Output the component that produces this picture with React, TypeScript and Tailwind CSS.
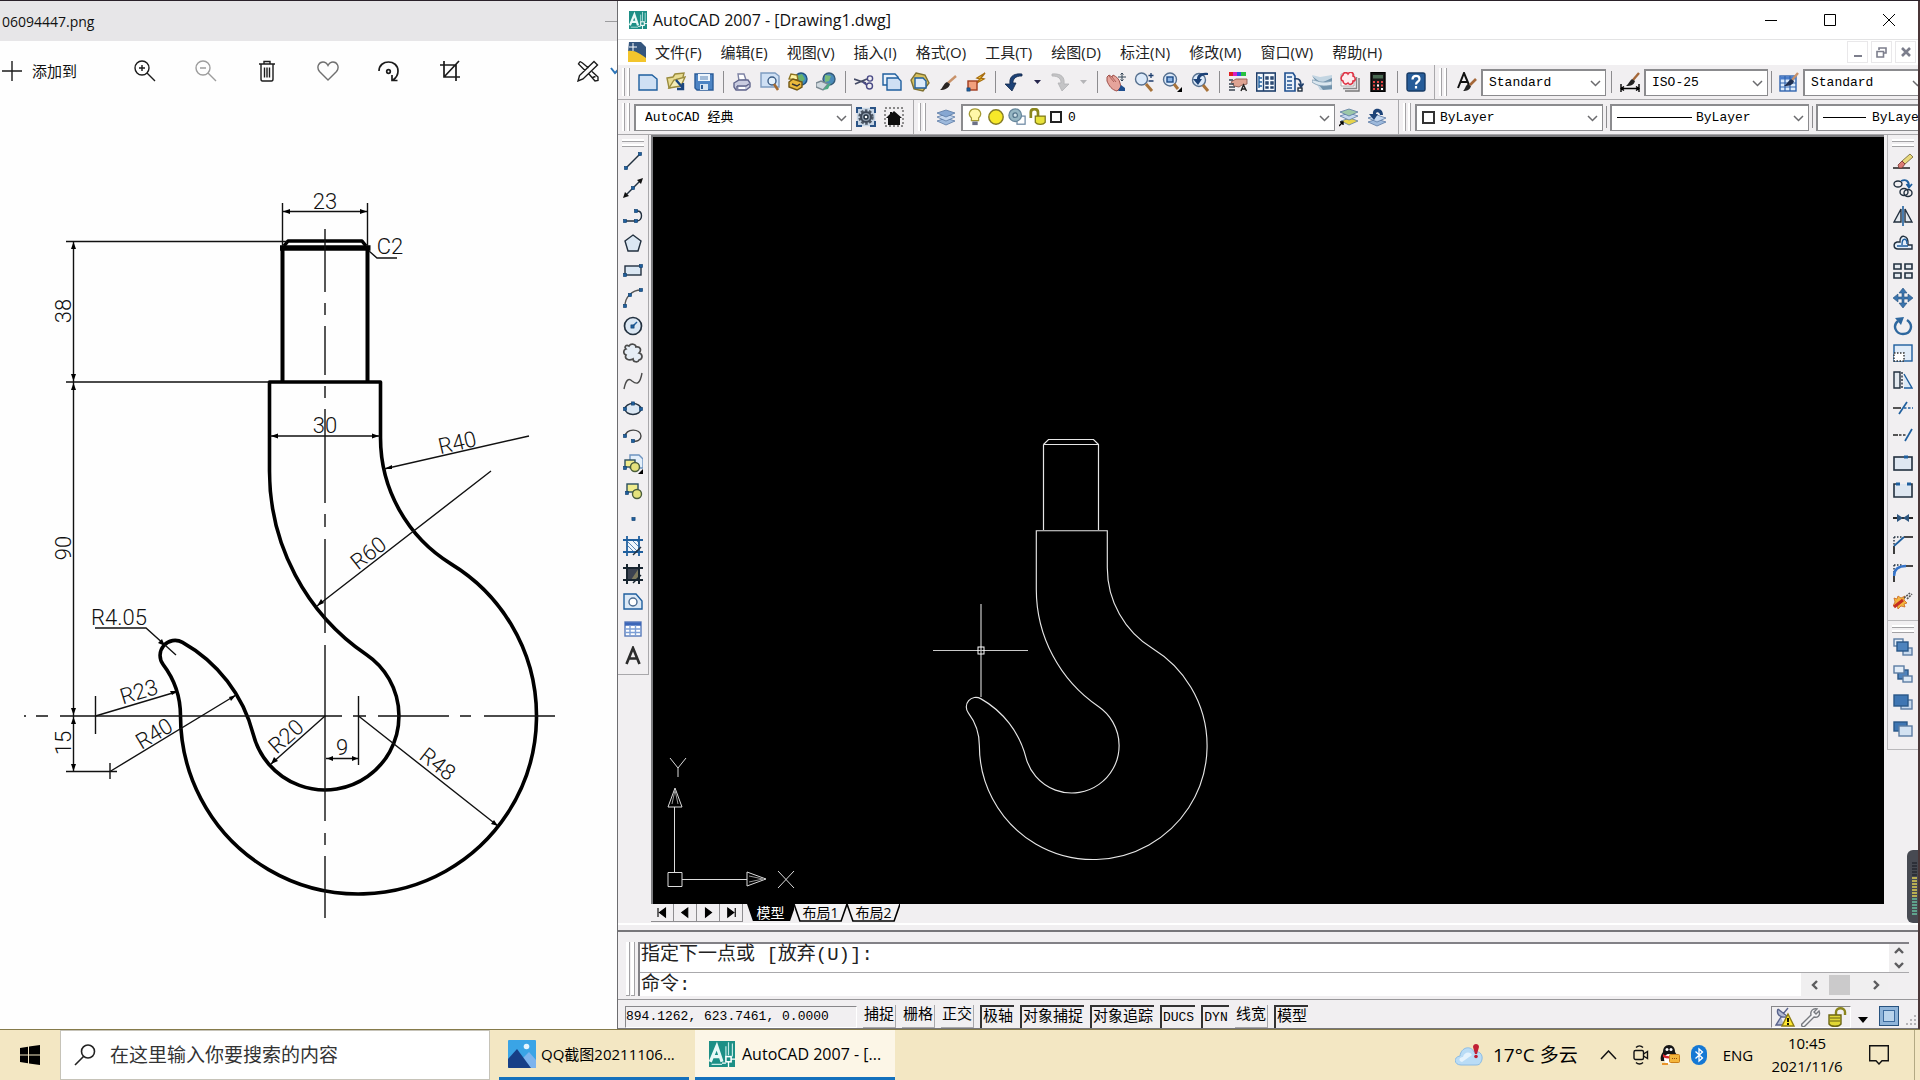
import React from "react";

const SANS = "font-['Open_Sans','Noto_Sans_CJK_SC',sans-serif]";
const MONO = "font-['Liberation_Mono','Noto_Sans_CJK_SC',monospace]";

const HOOK =
  "M269.5 382V471.3A222 222 0 0 0 366.6 654.8A74 74 0 1 1 253.3 734.5A148 148 0 0 0 182.5 642.4A15 15 0 0 0 163.2 664.6A85 85 0 0 1 180.5 716A178 178 0 1 0 451.3 564.1A148 148 0 0 1 380.5 437.8V382Z";

const B = "#1f5f9e";
const D = "#22303f";
const L = "#cfe0f4";

function Svg({ children, size = 20, className = "" }: { children: React.ReactNode; size?: number; className?: string }) {
  return (
    <svg viewBox="0 0 20 20" width={size} height={size} fill="none" stroke={D} strokeWidth="1.4" className={"shrink-0 " + className} aria-hidden="true">
      {children}
    </svg>
  );
}

const dot = (x: number, y: number) => <rect key={x + "-" + y} x={x - 1.6} y={y - 1.6} width="3.2" height="3.2" fill={B} stroke="#123f6d" strokeWidth="0.6" />;

const layersShape = (
  <g stroke="#5b7aa5" strokeWidth="0.8">
    <path d="M1 14l9-3 9 3-9 4z" fill="#9db9dc" />
    <path d="M1 10l9-3 9 3-9 4z" fill="#c3d6ee" />
    <path d="M1 6l9-3 9 3-9 4z" fill="#86a7d2" />
  </g>
);

const icons: Record<string, React.ReactNode> = {
  new: <path d="M1 3h13l5 4v11H1z" fill={L} stroke={B} />,
  open: (
    <>
      <path d="M1 6l6-1 2-3 9-1-3 12-12 3z" fill="#e8dc92" stroke="#9b8c3e" />
      <path d="M3 16L8 8l11-3-4 9z" fill="#f4edb8" stroke="#9b8c3e" />
      <path d="M10 8l7 8M17 11v6h-6" stroke="#1b4680" strokeWidth="2.4" />
    </>
  ),
  save: (
    <>
      <path d="M1 2h18v16H3l-2-2z" fill="#4d84c4" stroke="#2b5c98" />
      <path d="M4 2h12v7H4z" fill="#eef5fc" stroke="none" />
      <path d="M6 5h8M6 7h8" stroke="#89a8cb" />
      <path d="M6 12h8v6H6z" fill="#d5e3f2" stroke="none" />
      <path d="M8 13v4" stroke="#2b5c98" strokeWidth="2" />
    </>
  ),
  print: (
    <>
      <path d="M7 9L6 2h6l2 6z" fill="#fff" stroke="#7d82a4" />
      <path d="M2 11l5-3h9l2 3v4l-4 3H4l-2-3z" fill="#c9cce0" stroke="#60658c" />
      <path d="M5 14h9l3-2M5 14v3" stroke="#60658c" />
      <path d="M7 16h6" stroke="#fff" strokeWidth="2" />
    </>
  ),
  preview: (
    <>
      <path d="M1 1h14l4 3v11H1z" fill={L} stroke="#7e9cc0" />
      <circle cx="12" cy="9" r="4" fill="#e6f2fc" stroke="#3c5d86" />
      <path d="M14 12l4 6" stroke="#a46a30" strokeWidth="2.6" />
    </>
  ),
  publish: (
    <>
      <circle cx="13" cy="7" r="6" fill="#3f8bc0" stroke="#1f527f" />
      <path d="M9 4l5-2 3 5-4 4z" fill="#67b26b" stroke="none" />
      <path d="M1 7l2-5 6 1 1 5z" fill="#fff3a2" stroke="#8c7320" />
      <path d="M1 10l4-3 9 3v5l-5 3-8-3z" fill="#eab93c" stroke="#715714" />
      <path d="M4 12l5 2 3-2" stroke="#333" />
    </>
  ),
  dwf: (
    <>
      <circle cx="13" cy="7" r="6" fill="#4b8bb9" stroke="#355a78" />
      <path d="M9 3l6 1-2 5-4 1z" fill="#79bb79" stroke="none" />
      <path d="M0 11l5-2 7 3-5 6-7-3z" fill="#cfd8de" stroke="#7b8992" />
      <path d="M7 18l5-6 3-1-3 6z" fill="#4da884" stroke="none" />
    </>
  ),
  cut: (
    <>
      <path d="M0 7l12 4M1 12l12-5" stroke="#444b66" strokeWidth="1.8" />
      <circle cx="16" cy="6.500" r="2.600" stroke="#4a4a86" />
      <circle cx="15.500" cy="14" r="3" stroke="#4a4a86" />
      <path d="M9 10l4 3" stroke="#4a4a86" strokeWidth="2" />
    </>
  ),
  copy: (
    <>
      <path d="M1 2h12l3 3v8H1z" fill="#eaf2fb" stroke={B} />
      <path d="M5 6h11l3 3v9H5z" fill={L} stroke={B} />
    </>
  ),
  paste: (
    <>
      <path d="M6 1l9 2 4 8-6 8-9-2-3-9z" fill="#d9c25f" stroke="#7f7132" />
      <path d="M5 6h8l3 3v7H5z" fill="#dcebfa" stroke={B} />
    </>
  ),
  brush: (
    <>
      <path d="M10 11l8-7" stroke="#c8926a" strokeWidth="2.400" />
      <path d="M2 18c3-2 3-6 7-8l3 2c-1 4-5 6-10 6z" fill="#2b2522" stroke="none" />
    </>
  ),
  block: (
    <>
      <path d="M19 1l-8 5 3 1-5 5 9-5-3-1z" fill="#ffd83b" stroke="#a86e12" />
      <rect x="2" y="9" width="9" height="9" fill="#f2a07d" stroke="#a13d20" />
      {dot(2.500, 17.500)}
    </>
  ),
  undo: <path d="M18 2C8 1 5 6 6 12H1l7 7 4-8H9c0-4 2-7 9-7z" fill="#1c4277" stroke="#14294b" strokeWidth="0.800" />,
  redo: <path d="M2 2c10-1 13 4 12 10h5l-7 7-4-8h3c0-4-2-7-9-7z" fill="#c4c4c6" stroke="#b1b1b4" strokeWidth="0.800" />,
  pan: (
    <>
      <path d="M1 5l2-2 3 2 1-2c4 2 6 4 7 8l1 4-4 4c-5-1-8-5-10-10z" fill="#e6a49b" stroke="#9d4f49" strokeWidth="1" />
      <path d="M3 4l5 6M6 5l4 5" stroke="#9d4f49" strokeWidth="0.800" />
      <path d="M12 19h7v-3l-4-3z" fill="#1f4f8f" stroke="none" />
      <path d="M16 1v8M12 5h8M14.500 2.500L16 1l1.500 1.500M14.500 7.500L16 9l1.500-1.500" stroke="#345" strokeWidth="1" />
    </>
  ),
  zoom: (
    <>
      <circle cx="7.500" cy="7" r="6" fill="#dceafa" stroke="#56708f" />
      <path d="M12 12l6 7" stroke="#a8733a" strokeWidth="3" />
      <path d="M17 1v5M14.500 3.500h5M14.500 9h5" stroke="#1c3d6e" strokeWidth="1.300" />
    </>
  ),
  zoomwin: (
    <>
      <circle cx="8" cy="7.500" r="6.500" fill="#dceafa" stroke="#56708f" />
      <rect x="5" y="5" width="6" height="5" fill="#8db4e3" stroke="#1c4a87" />
      <path d="M12 12l4 5" stroke="#a8733a" strokeWidth="3" />
      <path d="M20 15v5h-5z" fill="#000" stroke="none" />
    </>
  ),
  zoomprev: (
    <>
      <circle cx="9" cy="8" r="6.500" fill="#dceafa" stroke="#56708f" />
      <path d="M13 13l5 6" stroke="#a8733a" strokeWidth="3" />
      <path d="M18 1C9 0 7 4 7 7H3l5 6 4-6h-2c0-2 2-4 8-4z" fill="#1c4277" stroke="none" />
    </>
  ),
  props: (
    <>
      <path d="M1 2h4" stroke="#e02020" strokeWidth="4" />
      <path d="M5 2h4" stroke="#d61fc5" strokeWidth="4" />
      <path d="M9 2h4" stroke="#2c53e0" strokeWidth="4" />
      <path d="M13 2h5" stroke="#26c140" strokeWidth="4" />
      <path d="M3 10l5-3 11 0v5l-5 1-3 2-5-1z" fill="#dfa392" stroke="#8e5a50" strokeWidth="0.900" />
      <path d="M1 8h4M1 12h5M1 15h6M1 18h6" stroke="#3b4450" />
      <path d="M13 19l2.500-6 3 6M14 17h4" stroke="#222" />
    </>
  ),
  dcenter: (
    <>
      <rect x="0.700" y="1" width="18.600" height="18" fill="#f6fafe" stroke="#1f3f6b" strokeWidth="1.600" />
      <path d="M7.500 1v18" stroke="#1f3f6b" />
      <path d="M3 4v12M3 6h3M3 10h3M3 14h3" stroke={B} />
      <path d="M10 5h2v2h-2zM15 5h2v2h-2zM10 10h2v2h-2zM15 10h2v2h-2zM10 15h2v1h-2zM15 15h2v1h-2z" stroke="#1f3f6b" fill="none" />
    </>
  ),
  palettes: (
    <>
      <path d="M1 1h8l2 3v15H1z" fill="#e7f0fa" stroke="#1f4f8f" strokeWidth="1.600" />
      <path d="M3 5h5M3 9h5M3 13h5M3 16h5" stroke="#1f4f8f" />
      <path d="M10 7c5-1 7 1 7 7M14.500 11.500L17 15l2.500-3.500" stroke="#1f3f6b" strokeWidth="1.600" />
      <rect x="14" y="16" width="4" height="3" fill="#fff" />
    </>
  ),
  sheets: (
    <>
      <path d="M0 3l8 2 12-2v15H8z" fill="#c3d5e2" stroke="none" />
      <path d="M0 4l9 7 11-5v11l-9 1z" fill="#7293ac" stroke="none" />
      <path d="M0 8c5 0 9 4 20 1v4c-8 2-15 1-20-3z" fill="#dbe7ef" stroke="#7f9cb2" strokeWidth="0.800" />
    </>
  ),
  markup: (
    <>
      <path d="M19 6v13H5" stroke="#777" />
      <path d="M16.500 5v11.500H3" stroke="#888" />
      <path d="M1 2h13v12H1z" fill="#fff" stroke="#999" strokeWidth="0.800" />
      <path d="M3 3c0-3 4-3 5-1 2-3 6-2 5 2 3 1 3 5 0 5 0 4-4 4-5 2-2 2-5 1-5-2-3-1-2-5 0-6z" fill="#fdecee" stroke="#df3345" strokeWidth="1.600" />
    </>
  ),
  calc: (
    <>
      <rect x="3" y="0.500" width="14" height="19" fill="#191919" stroke="#000" />
      <rect x="5" y="3" width="10" height="3.500" fill="#4a6a52" stroke="none" />
      <path d="M5 10h2M9 10h2M13 10h2M5 13.500h2M9 13.500h2M13 13.500h2M5 17h2M9 17h2M13 17h2" stroke="#e64646" strokeWidth="2" />
      <path d="M9 13.500h2M13 17h2" stroke="#fff" strokeWidth="2" />
    </>
  ),
  help: (
    <>
      <rect x="1" y="1" width="18" height="18" rx="2" fill="#265c99" stroke="#173b66" />
      <path d="M6.500 7.500c0-5 7-4.500 7-.5 0 3-3.500 2.500-3.500 5.500M10 14v2.500" stroke="#fff" strokeWidth="2.200" />
    </>
  ),
  textstyle: (
    <>
      <path d="M1 16L7 1l5 12M4 10h6" stroke="#111" strokeWidth="2" />
      <path d="M13 13l6-6" stroke="#a5683a" strokeWidth="2.600" />
      <path d="M6 19c2-1 2-5 5-7l3 2c-1 4-4 5-8 5z" fill="#222" stroke="none" />
    </>
  ),
  dimstyle: (
    <>
      <path d="M13 8l6-7" stroke="#a5683a" strokeWidth="2.400" />
      <path d="M6 14c3-2 3-5 6-7l3 2c-1 4-4 5-9 5z" fill="#222" stroke="none" />
      <path d="M1 12v8M19 12v8M1 16.500h18M4 14.500l-3 2 3 2M16 14.500l3 2-3 2" stroke="#000" />
    </>
  ),
  tablestyle: (
    <>
      <rect x="1" y="4" width="16" height="15" fill="#dcebfb" stroke="#3164ae" />
      <path d="M1 6h16" stroke="#4b7dcb" strokeWidth="3" />
      <path d="M1 11h16M1 15h16M6 4v15M11 4v15" stroke="#3164ae" strokeWidth="1.200" />
      <path d="M13 8l6-7" stroke="#c8926a" strokeWidth="2.400" />
      <path d="M5 14c3-2 4-5 7-7l3 2c-1 4-4 5-10 5z" fill="#1f3052" stroke="none" />
    </>
  ),
  gear: (
    <>
      <rect x="0.800" y="0.800" width="18.400" height="18.400" fill="#c7d5e4" stroke="none" />
      <path d="M1 6V1h5M14 1h5v5M19 14v5h-5M6 19H1v-5" stroke="#2c5486" strokeWidth="2" />
      <circle cx="10" cy="10" r="6.500" stroke="#4d5866" strokeWidth="2.400" strokeDasharray="2.600 1.500" />
      <circle cx="10" cy="10" r="5" fill="#8f9dac" stroke="#3d4857" strokeWidth="2" />
      <circle cx="10" cy="10" r="2" fill="#fff" />
    </>
  ),
  home: (
    <>
      <rect x="1" y="1" width="18" height="18" stroke="#666" strokeDasharray="2 2" />
      <path d="M2 11l4-4V5h2v1l2-2 8 7h-2v7H4v-7z" fill="#0c0c0c" stroke="none" />
    </>
  ),
  layers: layersShape,
  layercur: (
    <>
      <g stroke="#5b7aa5" strokeWidth="0.800">
        <path d="M2 14l9-3 8 3-9 4z" fill="#e7d34a" />
        <path d="M1 9l9-3 9 3-9 4z" fill="#c3d6ee" />
        <path d="M1 5l9-3 9 3-9 4z" fill="#9cc7a8" />
      </g>
      <path d="M0 19l4-4M1 15h3v3" stroke="#000" />
    </>
  ),
  layerprev: (
    <>
      <g stroke="#5b7aa5" strokeWidth="0.800">
        <path d="M1 15l9-3 9 3-9 4z" fill="#9db9dc" />
        <path d="M1 11l9-3 9 3-9 4z" fill="#c3d6ee" />
      </g>
      <path d="M16 8c0-8-11-8-10-1H2l5 6 4-6H9c0-3 4-2 4 1z" fill="#1c4277" stroke="none" />
    </>
  ),
  bulb: (
    <>
      <path d="M6 11C1 6 5 1 10 1s9 5 4 10v3H6z" fill="#fff8a8" stroke="#a49a33" />
      <path d="M7 15h6v4H7z" fill="#6c7188" stroke="none" />
    </>
  ),
  sun: <circle cx="10" cy="10" r="8" fill="#f7e829" stroke="#857c25" strokeWidth="1.600" />,
  freeze: (
    <>
      <rect x="10" y="9" width="9" height="9" fill="#fff" stroke="#6e8aa4" />
      <circle cx="8" cy="8" r="7" fill="#96b6c3" stroke="#67879c" />
      <circle cx="8" cy="8" r="2.500" fill="#cfe0e8" stroke="#55768c" />
    </>
  ),
  lock: (
    <>
      <path d="M2 11V5c0-5 8-5 8 0v4" stroke="#8b861d" strokeWidth="3" />
      <path d="M7 9h11v7c-2 3-9 3-11 0z" fill="#e8e23a" stroke="#7e791b" />
    </>
  ),
  line: <>
    <path d="M3 17L17 3" />
    {dot(3, 17)}
    {dot(17, 3)}
  </>,
  xline: <>
    <path d="M2 18L18 2" />
    <path d="M0 20l2-6 4 4zM20 0l-6 2 4 4z" fill="#111" stroke="none" />
    {dot(10, 10)}
  </>,
  pline: <>
    <path d="M2 15h12M14 5c6 0 6 9 0 10" />
    {dot(2, 15)}
    {dot(13, 15)}
    {dot(13, 5)}
  </>,
  polygon: <path d="M10 2l8 6-3 10H5L2 8z" fill="#dbe7f3" />,
  rect: <>
    <rect x="2" y="5" width="16" height="9" fill="#dbe7f3" />
    {dot(2, 14)}
    {dot(18, 5)}
  </>,
  arc: <>
    <path d="M2 18C2 9 9 2 18 2" stroke="#555" />
    {dot(2, 18)}
    {dot(7, 7)}
    {dot(18, 2)}
  </>,
  circle: <>
    <circle cx="10" cy="10" r="8.500" fill="#dbe7f3" strokeWidth="1.700" />
    <path d="M10 10l4-4" stroke={B} />
    {dot(9.500, 10.500)}
  </>,
  cloud: <path d="M6 3c2-3 7-2 7 1 4-1 6 3 3 6 4 1 4 6 0 7-1 3-6 2-6-1-4 2-9 0-7-4-3-1-3-5 0-6-2-2 0-5 3-3z" fill="#e6edf5" stroke="#4b4b4b" strokeWidth="1.700" />,
  spline: <path d="M1 18C3 8 6 7 9 10c5 4 8 3 10-8" stroke="#4b4b4b" />,
  ellipse: <>
    <ellipse cx="10" cy="10" rx="8" ry="5.500" fill="#dbe7f3" />
    {dot(2, 10)}
    {dot(18, 10)}
    {dot(10, 4.500)}
  </>,
  ellipsearc: <>
    <path d="M2 11C2 2 18 2 18 10c0 4-4 6-8 5" stroke="#444" />
    {dot(2, 10)}
    {dot(10, 15)}
  </>,
  insert: <>
    <path d="M7 1h9l4 4v9H7z" fill="#e4effa" stroke="#6e94c0" />
    <rect x="2" y="6" width="10" height="7" fill="#f0ec8c" stroke="#2a4f5e" />
    <circle cx="12" cy="13" r="4.500" fill="#e5e27c" stroke="#4a5d3b" />
    {dot(2, 14)}
    <path d="M20 15v5h-5z" fill="#000" stroke="none" />
  </>,
  mkblock: <>
    <rect x="4" y="3" width="11" height="8" fill="#f0ec8c" stroke="#2a4f5e" />
    <circle cx="14" cy="13" r="4.500" fill="#e5e27c" stroke="#4a5d3b" />
    {dot(4, 12)}
  </>,
  point: dot(10.500, 10),
  hatch: <>
    <path d="M5 4h10v12H5z" fill="#eff5fb" stroke="none" />
    <path d="M5 6l9 9M5 10l6 6M9 4l6 6M13 4l3 3" stroke="#5a85b5" strokeWidth="1" />
    <path d="M0 4h20M0 16h20M4 0v20M16 0v20" stroke={B} strokeWidth="1.800" />
    <path d="M10 19l8-8" stroke={D} />
  </>,
  gradient: <>
    <path d="M4 4h12v12H4z" fill="#3b4250" stroke="none" />
    <path d="M16 4v12H8z" fill="#7d7a5e" stroke="none" />
    <path d="M0 4h20M0 16h20M4 0v20M16 0v20" stroke="#17242f" strokeWidth="2" />
    <path d="M10 19l8-8" stroke="#17242f" />
  </>,
  region: <>
    <path d="M1 3h12l6 7v8H1z" fill="#dce9f6" stroke={B} />
    <circle cx="10" cy="11" r="4" fill="#fff" stroke="#4a6b91" />
  </>,
  table: <>
    <rect x="2" y="3" width="16" height="14" fill="#fff" stroke="#5779b8" />
    <path d="M2 5h16" stroke="#3c66b8" strokeWidth="3.500" />
    <path d="M2 10h16M2 13.500h16M7 6v11M12.500 6v11" stroke="#7c9fd6" />
  </>,
  mtext: <path d="M3.500 18L10 2l6.500 16M6 12.500h8" stroke="#2c2c2c" strokeWidth="2.600" />,
  erase: <>
    <path d="M0 17h17" stroke="#111" />
    <path d="M9 10l8-7 3 3-8 7z" fill="#e9d97c" stroke="#6d6130" strokeWidth="0.800" />
    <path d="M5 14l4-4 3 3-3 4H6z" fill="#db7b74" stroke="#74332f" strokeWidth="0.800" />
  </>,
  copyobj: <>
    <ellipse cx="5" cy="6" rx="4" ry="3" />
    <ellipse cx="11" cy="14" rx="4" ry="3.500" />
    <ellipse cx="15" cy="15" rx="4" ry="3.500" />
    <path d="M8 3c5-2 8 0 8 5M13.500 6L16 9.500 19 6" stroke={B} strokeWidth="1.800" />
  </>,
  mirror: <>
    <path d="M8 3v13H1zM12 3v13h7z" fill="#e4e9ef" />
    <path d="M10 0v20" stroke={B} strokeWidth="1.600" />
  </>,
  offset: <>
    <path d="M5 16h14v-4h-4C16 1 6 1 7 9H4c-4 1-4 7 1 7z" fill="#e4eefa" />
    <path d="M4 13h11M9 12c0-8 5-7 5-1" stroke={B} />
  </>,
  array: <path d="M1 3h7v5H1zM12 3h7v5h-7zM1 12h7v5H1zM12 12h7v5h-7z" fill="#e4e9ef" strokeWidth="1.600" />,
  move: <path d="M10 0l4 5h-3v4h4V6l5 4-5 4v-3h-4v4h3l-4 5-4-5h3v-4H5v3l-5-4 5-4v3h4V5H6z" fill="#3b74ad" stroke="#27537f" strokeWidth="0.600" />,
  rotate: <>
    <path d="M5 5C-1 10 3 18 10 18c8 0 11-9 4-14" stroke="#2f689f" strokeWidth="2.400" />
    <path d="M2 2l9-1-3 8z" fill="#2f689f" stroke="none" />
  </>,
  scale: <>
    <rect x="1" y="2" width="18" height="16" fill="#e1ecf8" stroke={B} />
    <rect x="1" y="10" width="10" height="8" fill="#fff" stroke="#333" strokeDasharray="1.500 1.500" />
  </>,
  stretch: <>
    <path d="M1 2h6v16H1z" fill="#e4e9ef" />
    <path d="M9 2v16" strokeDasharray="2 1.500" />
    <path d="M11 4l8 14h-8" fill="#dce9f6" stroke={B} />
  </>,
  trim: <>
    <path d="M0 10h8" stroke="#111" />
    <path d="M11 10h9" stroke={B} strokeDasharray="2.500 1.500" />
    <path d="M6 16l8-12" stroke={B} strokeWidth="1.700" />
  </>,
  extend: <>
    <path d="M0 10h5" stroke="#111" />
    <path d="M6 10h8" stroke="#333" strokeDasharray="2.500 1.500" />
    <path d="M12 16l7-12" stroke={B} strokeWidth="1.700" />
  </>,
  breakpt: <>
    <rect x="1" y="4" width="18" height="13" fill="#dfe7f1" strokeWidth="1.600" />
    <path d="M11 4h4" stroke={B} strokeWidth="3" />
  </>,
  brk: <>
    <path d="M4 4H1v13h18V4h-3" fill="#dfe7f1" strokeWidth="1.600" />
    <path d="M3 4h4M14 4h4" stroke={B} strokeWidth="3" />
  </>,
  join: <>
    <path d="M0 10h20" stroke="#111" strokeWidth="1.800" />
    <path d="M4 6l6 4-6 4zM16 6l-6 4 6 4z" fill="#2d5680" stroke="none" />
  </>,
  chamfer: <>
    <path d="M1 2h9M1 2v8" strokeDasharray="1.500 1.500" />
    <path d="M11 2h9M1 11v8" stroke="#111" strokeWidth="1.600" />
    <path d="M1 11l10-9" stroke={B} strokeWidth="1.700" />
  </>,
  fillet: <>
    <path d="M1 2h9M1 2v8" strokeDasharray="1.500 1.500" />
    <path d="M13 3h7M1 13v6" stroke="#111" strokeWidth="1.600" />
    <path d="M1 13C1 6 6 3 13 3" stroke="#3674c9" strokeWidth="2.600" />
  </>,
  explode: <>
    <path d="M1 8l3 1 1-3 3 2 4-2-1 4 3 3-3 1 1 3-4-1-3 3-1-4-4 1 2-4z" fill="#f4b63f" stroke="#c9681f" strokeWidth="0.800" />
    <path d="M1 17l9-7" stroke="#c52d22" strokeWidth="3" />
    <path d="M11 8l6-5M14 9l5-5" stroke="#555" strokeWidth="1.600" strokeDasharray="2 1" />
  </>,
  front: <>
    <rect x="1" y="2" width="9" height="7" fill="#e3edf8" stroke="#5c7da3" />
    <rect x="10" y="11" width="9" height="7" fill="#c8daee" stroke="#5c7da3" />
    <rect x="4" y="5" width="11" height="9" fill="#4e83bd" stroke="#2a5788" />
  </>,
  back: <>
    <rect x="5" y="6" width="10" height="9" fill="#4e83bd" stroke="#2a5788" />
    <rect x="1" y="2" width="10" height="7" fill="#e3edf8" stroke="#5c7da3" />
    <rect x="10" y="12" width="9" height="6" fill="#dbe8f5" stroke="#5c7da3" />
  </>,
  above: <>
    <rect x="8" y="8" width="11" height="9" fill="#c8daee" stroke="#5c7da3" />
    <rect x="1" y="3" width="14" height="11" fill="#3f76b3" stroke="#2a5788" />
  </>,
  below: <>
    <rect x="1" y="3" width="13" height="9" fill="#3f76b3" stroke="#2a5788" />
    <rect x="6" y="7" width="13" height="10" fill="#d3e2f2" stroke="#5c7da3" />
  </>,
};

function AcadLogo({ className }: { className: string }) {
  return (
    <svg viewBox="0 0 20 20" className={"shrink-0 " + className} preserveAspectRatio="none" aria-hidden="true">
      <rect width="20" height="20" fill="#1d8f86" />
      <path d="M1 16L6 4l4 12M3 12h6" stroke="#e9f8f6" strokeWidth="2.400" fill="none" />
      <path d="M15 1v10M13 4v8M18 2v10M2 18h8" stroke="#c6ebe7" strokeWidth="0.900" />
      <rect x="13" y="12" width="4" height="4" fill="#1d8f86" stroke="#fff" strokeWidth="1.200" />
      <path d="M17 14h3M15 16v4M10 17h3" stroke="#fff" />
    </svg>
  );
}

function Grip() {
  return (
    <span className="flex h-7 w-2 shrink-0 justify-between">
      <span className="w-[3px] border-r border-[#a3a2a5] bg-white" />
      <span className="w-[3px] border-r border-[#a3a2a5] bg-white" />
    </span>
  );
}

function HGrip() {
  return (
    <span className="mx-1 flex h-[8px] shrink-0 flex-col justify-between self-stretch">
      <span className="h-[3px] border-b border-[#a3a2a5] bg-white" />
      <span className="h-[3px] border-b border-[#a3a2a5] bg-white" />
    </span>
  );
}

function Tool({ name, label }: { name: string; label: string }) {
  return (
    <button type="button" aria-label={label} className="flex h-7 w-7 shrink-0 items-center justify-center">
      <Svg>{icons[name]}</Svg>
    </button>
  );
}

function Sep({ narrow = false }: { narrow?: boolean }) {
  return (
    <span className={"flex shrink-0 justify-center " + (narrow ? "w-[7px]" : "w-[10px]")}>
      <span className="h-[22px] w-px bg-[#8d8c8f]" />
    </span>
  );
}

function Caret({ muted = false }: { muted?: boolean }) {
  return (
    <button type="button" aria-label="更多" className="flex h-7 w-[18px] shrink-0 items-center justify-center">
      <svg width="7" height="4" viewBox="0 0 7 4" fill={muted ? "#b5b5b8" : "#26264d"} aria-hidden="true">
        <path d="M0 0h7L3.500 4z" />
      </svg>
    </button>
  );
}

function Combo({ label, value, className, pad = "pl-[6px]", children }: { label: string; value: string; className: string; pad?: string; children?: React.ReactNode }) {
  return (
    <span className={"relative flex h-[27px] shrink-0 " + className}>
      <select
        aria-label={label}
        defaultValue={value}
        className={"h-full w-full appearance-none border border-t-2 border-l-2 border-[#8b8b8e] bg-white text-[13px] text-black " + MONO + " " + pad}
      >
        <option>{value}</option>
      </select>
      {children}
      <svg width="11" height="7" viewBox="0 0 11 7" fill="none" stroke="#6b6b6e" strokeWidth="1.500" className="pointer-events-none absolute top-[11px] right-[5px]" aria-hidden="true">
        <path d="M1 1l4.500 4.500L10 1" />
      </svg>
    </span>
  );
}

const BAR = "flex h-[35px] shrink-0 items-center border-b border-r border-[#a9a8ab] bg-[#f1eff1] pl-1";

function PhotoWindow() {
  const stroke = { fill: "none", stroke: "#1b1b1b", strokeWidth: 1.4 } as const;
  const photoBtn = "flex h-10 w-[61px] shrink-0 items-center justify-center";
  return (
    <section className={"flex min-w-0 flex-col overflow-hidden bg-[#fefefe] " + SANS}>
      <header className="flex h-[40px] shrink-0 items-center justify-between bg-[#e7e6e8] pl-[2px]">
        <h1 className="text-[14px] text-[#111]">06094447.png</h1>
        <button type="button" aria-label="最小化" className="flex h-full w-3 items-center">
          <span className="h-px w-3 bg-[#9c9c9e]" />
        </button>
      </header>
      <nav className="flex h-[60px] shrink-0 items-center">
        <button type="button" className="flex w-[114px] shrink-0 items-center gap-[10px] pl-[2px] text-[15px] text-[#111]">
          <svg width="20" height="20" viewBox="0 0 20 20" {...stroke} aria-hidden="true">
            <path d="M0 10h20M10 0v20" />
          </svg>
          添加到
        </button>
        <button type="button" aria-label="放大" className={photoBtn}>
          <svg width="22" height="22" viewBox="0 0 22 22" {...stroke} aria-hidden="true">
            <circle cx="8" cy="8" r="7" />
            <path d="M13 13l8 8M8 5v6M5 8h6" />
          </svg>
        </button>
        <button type="button" aria-label="缩小" className={photoBtn}>
          <svg width="22" height="22" viewBox="0 0 22 22" {...stroke} stroke="#9d9d9d" aria-hidden="true">
            <circle cx="8" cy="8" r="7" />
            <path d="M13 13l8 8M5 8h6" />
          </svg>
        </button>
        <button type="button" aria-label="删除" className={photoBtn}>
          <svg width="18" height="22" viewBox="0 0 18 22" {...stroke} aria-hidden="true">
            <path d="M1 4h16M6 4V1.500h6V4M3 4v15c0 1 .5 2 1.500 2h9c1 0 1.500-1 1.500-2V4M6.500 7.500v10M9 7.500v10M11.500 7.500v10" />
          </svg>
        </button>
        <button type="button" aria-label="收藏" className={photoBtn}>
          <svg width="22" height="20" viewBox="0 0 22 20" {...stroke} stroke="#707070" aria-hidden="true">
            <path d="M11 19L2.500 10.500C-1 6 2 1 6 1c2.500 0 4 1.500 5 3.500C12 2.500 13.500 1 16 1c4 0 7 5 3.500 9.500z" />
          </svg>
        </button>
        <button type="button" aria-label="旋转" className={photoBtn}>
          <svg width="22" height="22" viewBox="0 0 22 22" {...stroke} strokeWidth={1.700} aria-hidden="true">
            <path d="M1 11C1-1 20-1 20 11c0 4-2 7-5 9M14 15v5.500h5.500" />
            <circle cx="10.500" cy="11.500" r="1.800" />
          </svg>
        </button>
        <button type="button" aria-label="裁剪" className={photoBtn}>
          <svg width="22" height="22" viewBox="0 0 22 22" {...stroke} strokeWidth={1.700} aria-hidden="true">
            <path d="M5 1v16h16M1 5h16v16M5 17L20 1" />
          </svg>
        </button>
        <span className="flex-1" />
        <button type="button" aria-label="编辑" className="flex h-10 w-[60px] shrink-0 items-center justify-center">
          <svg width="22" height="22" viewBox="0 0 22 22" {...stroke} aria-hidden="true">
            <path d="M17 1.500l3.500 3.500L6 19l-5 2 1.500-5.500zM3 1.500L1.500 4 8 10.500M3 1.500L5.500 3l6 5M12 14l6 7 3-.5V17l-6-5.500M15.500 17.500l3-1" />
          </svg>
        </button>
        <svg width="7" height="8" viewBox="0 0 7 8" fill="none" stroke="#2b74b8" strokeWidth="2" className="-ml-2 shrink-0" aria-hidden="true">
          <path d="M1 1l4 5 3-3" />
        </svg>
      </nav>
      <svg viewBox="0 101 617 927" preserveAspectRatio="xMinYMin meet" className="min-h-0 w-full flex-1" role="img" aria-label="吊钩零件图">
        <g fill="none" stroke="#000" strokeWidth="3.600" strokeLinejoin="round">
          <path d={HOOK} />
          <path d="M282.500 250V382M367.500 250V382" strokeWidth="4" />
          <path d="M284 246l4-5H362l4 5" strokeWidth="3.500" />
          <path d="M280 248H370.500" strokeWidth="5.500" />
        </g>
        <g fill="none" stroke="#111" strokeWidth="1.400">
          <path d="M282.500 203V246M367.500 203V246M282 211.500H368M66 241.500H287M66 382H269M73.500 241V771M369 251l8 7h20M270 436H380" />
          <path d="M384 469L529 436M317 606L491 471M95 628h51l30 27M95.500 716L176 692M110 771.500L236 695M325 716L271 764M358.500 716L498 826" />
          <path d="M358.500 696V765M326 758.500H358M66 771.500H117M110 763V779M95.500 696V734" />
          <path d="M325 229V292M325 303V315M325 326V375M325 386V398M325 409V503M325 514V527M325 539V633M325 645V821M325 833V845M325 856V918" />
          <path d="M24 716H26M36 716H48M60 716H342M353 716H366M378 716H449M460 716H471M484 716H555" />
        </g>
        <g fill="#000">
          <path d="M283 211.500l7-2.500v5zM367 211.500l-7-2.500v5zM73.500 242l-2.500 7h5zM73.500 381l-2.500-7h5zM73.500 383l-2.500 7h5zM73.500 715l-2.500-7h5zM73.500 717l-2.500 7h5zM73.500 771l-2.500-7h5z" />
          <path d="M271 436l7-2.500v5zM379 436l-7-2.500v5zM384 469l8-4v4zM317 606l4-7 3 4zM165 646l-7-3 4-4zM178 691l-8 0 2 4zM236 695l-7 2 2 4zM271 764l3-7 4 4zM498 826l-7-2 3-4zM327 758.500l6-2.500v5zM358 758.500l-6-2.500v5z" />
        </g>
        <g fill="#111" fontFamily="Roboto, sans-serif" fontWeight="300" fontSize="22" textAnchor="middle">
          <text x="325" y="209">23</text>
          <text x="390" y="254">C2</text>
          <text x="325" y="433">30</text>
          <text x="119" y="625">R4.05</text>
          <text x="342" y="755">9</text>
          <text transform="translate(71 311) rotate(-90)">38</text>
          <text transform="translate(71 548) rotate(-90)">90</text>
          <text transform="translate(71 743) rotate(-90)">15</text>
          <text transform="translate(459 450) rotate(-13)">R40</text>
          <text transform="translate(373 559) rotate(-38)">R60</text>
          <text transform="translate(141 699) rotate(-17)">R23</text>
          <text transform="translate(158 740) rotate(-31)">R40</text>
          <text transform="translate(291 742) rotate(-42)">R20</text>
          <text transform="translate(433 770) rotate(38)">R48</text>
        </g>
      </svg>
    </section>
  );
}

const menus = ["文件(F)", "编辑(E)", "视图(V)", "插入(I)", "格式(O)", "工具(T)", "绘图(D)", "标注(N)", "修改(M)", "窗口(W)", "帮助(H)"];

const drawTools: [string, string][] = [
  ["line", "直线"], ["xline", "构造线"], ["pline", "多段线"], ["polygon", "正多边形"], ["rect", "矩形"], ["arc", "圆弧"], ["circle", "圆"],
  ["cloud", "修订云线"], ["spline", "样条曲线"], ["ellipse", "椭圆"], ["ellipsearc", "椭圆弧"], ["insert", "插入块"], ["mkblock", "创建块"],
  ["point", "点"], ["hatch", "图案填充"], ["gradient", "渐变色"], ["region", "面域"], ["table", "表格"], ["mtext", "多行文字"],
];

const modifyTools: [string, string][] = [
  ["erase", "删除"], ["copyobj", "复制"], ["mirror", "镜像"], ["offset", "偏移"], ["array", "阵列"], ["move", "移动"], ["rotate", "旋转"],
  ["scale", "缩放"], ["stretch", "拉伸"], ["trim", "修剪"], ["extend", "延伸"], ["breakpt", "打断于点"], ["brk", "打断"], ["join", "合并"],
  ["chamfer", "倒角"], ["fillet", "圆角"], ["explode", "分解"],
];

const orderTools: [string, string][] = [["front", "前置"], ["back", "后置"], ["above", "置于对象之上"], ["below", "置于对象之下"]];

function SideTools({ tools, className }: { tools: [string, string][]; className: string }) {
  return (
    <div className={"flex shrink-0 flex-col items-center " + className}>
      {tools.map(([name, label]) => (
        <button key={name} type="button" aria-label={label} className="flex min-h-0 w-7 flex-1 items-center justify-center">
          <Svg>{icons[name]}</Svg>
        </button>
      ))}
    </div>
  );
}

function Canvas() {
  return (
    <div className="relative min-h-0 flex-1 overflow-hidden border-t-2 border-l-2 border-[#7d7d80] bg-black">
      <svg className="absolute inset-0 h-full w-full" fill="none" stroke="#e6e6e6" role="img" aria-label="绘图区">
        <g transform="translate(-653 -137)">
          <g transform="translate(1071.800 745.700) scale(.6396) translate(-325 -716)">
            <path d={HOOK.replace("M269.5 382V", "M269.5 380V").replace("V382Z", "V380Z")} strokeWidth="1.800" />
          </g>
          <path d="M1043.500 530V444.500M1098.500 530V444.500M1043.500 444.500H1099M1043.500 444.500l5-5H1093.500l5 5" strokeWidth="1.200" />
          <path d="M933 650.500H1028M981 604V697" stroke="#c9c9c9" strokeWidth="1.200" />
          <rect x="978" y="647" width="6" height="7" stroke="#fff" />
        </g>
      </svg>
      <svg width="132" height="138" viewBox="0 0 132 138" className="absolute bottom-[14px] left-[12px]" fill="none" stroke="#dcdcdc" aria-hidden="true">
        <path d="M3 120.500h14v14H3zM9.500 55V120M17 127.500H82M3 55h14L10 36zM82 120v14l19-7z" />
        <path d="M7 52l3-14 3 14M84 124l14 3-14 3" stroke="#9a9a9a" />
        <path d="M5 6l8 10 8-10M13 16v9M113 119l16 17M129 119l-16 17" />
      </svg>
    </div>
  );
}

function LayoutTabs() {
  const nav = ["M4 4v12M14 4v12L6 10z", "M13 4v12L5 10z", "M6 4v12l8-6z", "M5 4v12l8-6zM15 4v12"];
  const names = ["第一个布局", "上一个布局", "下一个布局", "最后一个布局"];
  return (
    <div className={"flex h-[18px] shrink-0 items-stretch bg-[#f1eff1] text-[14px] leading-[16px] " + SANS}>
      {nav.map((d, i) => (
        <button key={d} type="button" aria-label={names[i]} className="flex w-[23px] items-center justify-center border-r border-b border-[#8f8e91]">
          <svg width="15" height="15" viewBox="0 0 20 20" fill="#000" stroke="#000" strokeWidth="1.500" aria-hidden="true">
            <path d={d} />
          </svg>
        </button>
      ))}
      <div role="tablist" className="ml-[4px] flex">
        <button role="tab" aria-selected="true" type="button" className="relative w-[47px] text-white">
          <svg viewBox="0 0 48 18" className="absolute inset-0 h-full w-full" preserveAspectRatio="none" aria-hidden="true">
            <path d="M0 0h50l-6 17H6z" fill="#000" />
          </svg>
          <span className="relative">模型</span>
        </button>
        {["布局1", "布局2"].map((t) => (
          <button key={t} role="tab" aria-selected="false" type="button" className="relative w-[53px] text-black">
            <svg viewBox="0 0 54 18" className="absolute inset-0 h-full w-full" preserveAspectRatio="none" aria-hidden="true">
              <path d="M0 0l6 17h42L54 0" fill="#f4f3f4" stroke="#000" strokeWidth="1.600" />
            </svg>
            <span className="relative">{t}</span>
          </button>
        ))}
      </div>
    </div>
  );
}

const RAISED = "w-[33px] border-r border-b border-[#a9a8ab] text-[15px]";
const SUNK = "border-t-2 border-l-2 border-[#333] ";
const toggles: [string, boolean, string][] = [
  ["捕捉", false, RAISED],
  ["栅格", false, RAISED],
  ["正交", false, RAISED],
  ["极轴", true, SUNK + "w-[34px] text-[15px]"],
  ["对象捕捉", true, SUNK + "w-[64px] text-[15px]"],
  ["对象追踪", true, SUNK + "w-[64px] text-[15px]"],
  ["DUCS", true, SUNK + "w-[35px] text-[13px]"],
  ["DYN", true, SUNK + "w-[28px] text-[13px]"],
  ["线宽", false, RAISED],
  ["模型", true, SUNK + "w-[34px] text-[15px]"],
];

function Chevron({ d, label, className }: { d: string; label: string; className: string }) {
  return (
    <button type="button" aria-label={label} className={"flex items-center justify-center " + className}>
      <svg width="10" height="10" viewBox="0 0 10 10" fill="none" stroke="#5c5c5e" strokeWidth="2.400" aria-hidden="true">
        <path d={d} />
      </svg>
    </button>
  );
}

function CommandArea() {
  return (
    <>
      <div className="flex shrink-0 border-t-2 border-[#77767a] pt-[10px] pr-[9px] pb-[3px] pl-[8px]">
        <span className="mr-[3px] flex w-[9px] shrink-0 justify-between">
          <span className="w-[4px] border-r border-b border-[#a3a2a5] bg-white" />
          <span className="w-[4px] border-r border-b border-[#a3a2a5] bg-white" />
        </span>
        <div className={"min-w-0 flex-1 border-t-2 border-l-2 border-[#828186] text-[19px] text-[#222] " + MONO}>
          <div className="flex h-[29px] border-b border-[#aaa9ac] bg-white">
            <p className="flex-1 pl-px leading-[22px] whitespace-pre">指定下一点或 [放弃(U)]:</p>
            <div className="flex w-5 flex-col bg-[#f0eff0]">
              <Chevron d="M1 7l4-4 4 4" label="向上滚动" className="flex-1" />
              <Chevron d="M1 3l4 4 4-4" label="向下滚动" className="flex-1" />
            </div>
          </div>
          <div className="flex h-[23px] items-center bg-white">
            <label htmlFor="cmd" className="pt-[2px] pl-px leading-[21px]">命令:</label>
            <input id="cmd" className="h-full min-w-0 flex-1 outline-none" />
            <div className="flex h-full w-[87px] shrink-0 items-center bg-[#f0eff0]">
              <Chevron d="M7 1L3 5l4 4" label="向左滚动" className="w-7" />
              <span className="h-5 w-[21px] bg-[#cbcacb]" />
              <Chevron d="M3 1l4 4-4 4" label="向右滚动" className="ml-auto w-6" />
            </div>
            <span className="h-full w-[21px] shrink-0 bg-[#f1eff1]" />
          </div>
        </div>
      </div>
      <footer className="flex h-[30px] shrink-0 items-center border-t border-b border-t-[#98979a] border-b-[#77767a] pt-[5px] pl-[7px]">
        <output className={"flex h-[22px] w-[232px] shrink-0 items-center border border-t-[#88878a] border-r-white border-b-white border-l-[#88878a] pt-px text-[13px] text-black " + MONO}>
          894.1262, 623.7461, 0.0000
        </output>
        <div className={"ml-[6px] flex gap-[6px] text-black " + MONO}>
          {toggles.map(([t, on, cls], i) => (
            <button key={t + i} type="button" aria-pressed={on} className={"flex h-[23px] shrink-0 items-center justify-center leading-[20px] whitespace-nowrap " + cls}>
              {t}
            </button>
          ))}
        </div>
        <span className="flex-1" />
        <div className="flex h-[22px] w-[80px] items-center justify-around border border-t-[#88878a] border-r-white border-b-white border-l-[#88878a]">
          <Svg>
            <path d="M3 2l10 8M3 2c-2 5 2 9 8 8M8 7l5-6M6 10l-5 8h8" fill="#b2bbd4" stroke="#59638c" />
            <path d="M13 7l6 12H7z" fill="#ffe831" stroke="#8f7d12" />
            <path d="M13 11v4M13 16v2" stroke="#000" strokeWidth="1.800" />
          </Svg>
          <Svg>
            <path d="M1 17l9-9c-1-4 2-7 6-6l-3 3 2 2 3-3c2 5-2 7-5 6l-9 9c-2 2-5-1-3-2z" fill="#f4f4f6" stroke="#77797f" />
          </Svg>
          <Svg>
            <path d="M9 9V5c0-5 9-5 9 0v3" stroke="#8b851c" strokeWidth="2.400" />
            <path d="M2 8h12v9c-2 3-10 3-12 0z" fill="#e0d735" stroke="#6c6614" />
            <path d="M3 11h10M3 14h10" stroke="#8f8821" />
          </Svg>
        </div>
        <button type="button" aria-label="状态栏菜单" className="flex h-full w-[24px] items-end justify-center pb-[5px]">
          <svg width="10" height="6" viewBox="0 0 10 6" aria-hidden="true"><path d="M0 0h10L5 6z" /></svg>
        </button>
        <button type="button" aria-label="全屏显示" className="mb-[2px] ml-[4px] h-5 w-5 border border-[#27527f] bg-[#8fb4d9] p-[3px]">
          <span className="block h-full w-full border border-[#3d6b9e] bg-[#bad4ec]" />
        </button>
        <svg width="12" height="12" viewBox="0 0 12 12" fill="#b5b4b7" className="mt-2 ml-[7px]" aria-hidden="true">
          <path d="M8 0h2v2H8zM8 4h2v2H8zM4 4h2v2H4zM8 8h2v2H8zM4 8h2v2H4zM0 8h2v2H0z" />
        </svg>
      </footer>
    </>
  );
}

function CadWindow() {
  const mdi = "flex h-[22px] w-[21px] items-center justify-center border border-[#e9e8ea]";
  const caption = "flex h-full items-center justify-center";
  return (
    <section className="relative flex min-w-0 flex-col overflow-hidden border-l border-[#6d6d70] bg-[#f1eff1]">
      <header className={"flex h-[38px] shrink-0 items-center bg-white pb-px pl-[11px] " + SANS}>
        <AcadLogo className="h-[18px] w-[18px]" />
        <h1 className="ml-[6px] flex-1 text-[16px] text-[#111]">AutoCAD 2007 - [Drawing1.dwg]</h1>
        <button type="button" aria-label="最小化" className={caption + " w-[58px]"}><svg width="12" height="12" viewBox="0 0 12 12" stroke="#000" aria-hidden="true"><path d="M0 6.500h12" /></svg></button>
        <button type="button" aria-label="最大化" className={caption + " w-[60px]"}><svg width="12" height="12" viewBox="0 0 12 12" fill="none" stroke="#000" aria-hidden="true"><path d="M.5.5h11v11H.5z" /></svg></button>
        <button type="button" aria-label="关闭" className={caption + " w-[58px]"}><svg width="12" height="12" viewBox="0 0 12 12" stroke="#000" aria-hidden="true"><path d="M0 0l12 12M12 0L0 12" /></svg></button>
      </header>
      <nav className="flex h-[26px] shrink-0 items-center border-t border-[#e3e3e4] bg-white pr-[2px] pb-px pl-[10px]">
        <svg width="18" height="20" viewBox="0 0 18 20" className="shrink-0" aria-hidden="true">
          <path d="M1 0h12l5 5v15H0V10z" fill="#35567e" />
          <path d="M0 9c7-1 12 3 18 7v4H0z" fill="#f3c52c" />
          <path d="M5 1v8M1 5h8" stroke="#fff" />
        </svg>
        <ul className={"ml-[9px] flex flex-1 gap-[19px] text-[15px] leading-[22px] text-[#222] " + SANS}>
          {menus.map((m) => (
            <li key={m}><button type="button" className="whitespace-nowrap">{m}</button></li>
          ))}
        </ul>
        <div className="flex gap-[3px]">
          <button type="button" aria-label="最小化文档" className={mdi}><span className="mt-2 h-[2px] w-2 bg-[#7c7e8c]" /></button>
          <button type="button" aria-label="还原文档" className={mdi}>
            <svg width="11" height="11" viewBox="0 0 11 11" fill="none" stroke="#7c7e8c" strokeWidth="1.600" aria-hidden="true"><path d="M3 3V1h7v5H8M1 4.500h6.500V10H1z" /></svg>
          </button>
          <button type="button" aria-label="关闭文档" className={mdi}>
            <svg width="10" height="10" viewBox="0 0 10 10" stroke="#7c7e8c" strokeWidth="2.600" aria-hidden="true"><path d="M1 1l8 8M9 1L1 9" /></svg>
          </button>
        </div>
      </nav>

      <div className="flex shrink-0">
        <div className={BAR}>
          <Grip />
          <span className="w-1 shrink-0" />
          <Tool name="new" label="新建" /><Tool name="open" label="打开" /><Tool name="save" label="保存" />
          <Sep />
          <Tool name="print" label="打印" /><Tool name="preview" label="打印预览" /><Tool name="publish" label="发布" /><Tool name="dwf" label="三维 DWF" />
          <Sep />
          <Tool name="cut" label="剪切" /><Tool name="copy" label="复制" /><Tool name="paste" label="粘贴" /><Tool name="brush" label="特性匹配" /><Tool name="block" label="块编辑器" />
          <Sep />
          <Tool name="undo" label="放弃" /><Caret /><Tool name="redo" label="重做" /><Caret muted />
          <Sep />
          <Tool name="pan" label="实时平移" /><Tool name="zoom" label="实时缩放" /><Tool name="zoomwin" label="窗口缩放" /><Tool name="zoomprev" label="缩放上一个" />
          <Sep />
          <Tool name="props" label="特性" /><Tool name="dcenter" label="设计中心" /><Tool name="palettes" label="工具选项板" /><Tool name="sheets" label="图纸集管理器" /><Tool name="markup" label="标记集管理器" /><Tool name="calc" label="快速计算器" />
          <Sep />
          <Tool name="help" label="帮助" />
          <span className="w-[4px] shrink-0" />
        </div>
        <div className={BAR}>
          <Grip />
          <span className="w-[6px] shrink-0" />
          <Tool name="textstyle" label="文字样式" />
          <Combo label="文字样式" value="Standard" className="w-[125px]" />
          <Sep />
          <Tool name="dimstyle" label="标注样式" />
          <Combo label="标注样式" value="ISO-25" className="w-[124px]" />
          <Sep narrow />
          <Tool name="tablestyle" label="表格样式" />
          <Combo label="表格样式" value="Standard" className="w-[125px]" />
        </div>
      </div>

      <div className="flex shrink-0">
        <div className={BAR}>
          <Grip />
          <Combo label="工作空间" value="AutoCAD 经典" className="ml-1 w-[218px]" pad="pl-[9px]" />
          <Tool name="gear" label="工作空间设置" /><Tool name="home" label="我的工作空间" />
          <span className="w-[5px] shrink-0" />
        </div>
        <div className={BAR}>
          <Grip />
          <span className="w-[6px] shrink-0" />
          <Tool name="layers" label="图层特性管理器" />
          <Combo label="图层" value="0" className="ml-px w-[374px]" pad="pl-[105px]">
            <span className="pointer-events-none absolute top-1 left-[5px] flex items-center gap-[3px]">
              <Svg size={18}>{icons.bulb}</Svg>
              <Svg size={18}>{icons.sun}</Svg>
              <Svg size={18}>{icons.freeze}</Svg>
              <Svg size={18}>{icons.lock}</Svg>
              <span className="h-3 w-3 border-2 border-[#222] bg-white" />
            </span>
          </Combo>
          <Tool name="layercur" label="将对象的图层置为当前" /><Tool name="layerprev" label="上一个图层" />
          <span className="w-[7px] shrink-0" />
        </div>
        <div className={BAR}>
          <Grip />
          <Combo label="颜色" value="ByLayer" className="ml-1 w-[188px]" pad="pl-[23px]">
            <span className="pointer-events-none absolute top-[7px] left-[7px] h-[13px] w-[13px] border-2 border-[#333] bg-white" />
          </Combo>
          <Sep narrow />
          <Combo label="线型" value="ByLayer" className="w-[199px]" pad="pl-[84px]">
            <span className="pointer-events-none absolute top-[13px] left-[7px] h-px w-[75px] bg-black" />
          </Combo>
          <Sep narrow />
          <Combo label="线宽" value="ByLayer" className="w-[199px]" pad="pl-[54px]">
            <span className="pointer-events-none absolute top-[13px] left-[7px] h-px w-[43px] bg-black" />
          </Combo>
        </div>
      </div>

      <div className="flex min-h-0 flex-1">
        <aside className="flex w-[31px] shrink-0 flex-col items-stretch self-start border-r border-b border-[#a9a8ab] pt-[4px] pb-[4px]">
          <HGrip />
          <SideTools tools={drawTools} className="h-[523px]" />
        </aside>
        <div className="flex min-w-0 flex-1 flex-col pl-[2px] pb-[1px]">
          <Canvas />
          <LayoutTabs />
        </div>
        <div className="ml-[3px] flex w-[31px] shrink-0 flex-col">
          <aside className="flex flex-col border-b border-l border-[#b9b8bb] pt-[4px] pb-[6px]">
            <HGrip />
            <SideTools tools={modifyTools} className="h-[467px]" />
          </aside>
          <aside className="flex flex-col border-b border-l border-[#b9b8bb] pt-[4px] pb-[6px]">
            <HGrip />
            <SideTools tools={orderTools} className="h-[110px]" />
          </aside>
        </div>
      </div>
      <div className="h-[7px] shrink-0 border-t-2 border-white" />
      <CommandArea />
      <div className="absolute right-0 bottom-[106px] flex h-[73px] w-[11px] flex-col justify-end gap-px rounded-l-md bg-[#474a52] py-2 pr-px pl-[5px]">
        {Array.from({ length: 18 }, (_, i) => (
          <span key={i} className={i < 5 ? "h-[2px] bg-[#2d3038]" : i < 12 ? "h-[2px] bg-[#b9ae52]" : "h-[2px] bg-[#5fa28c]"} />
        ))}
      </div>
    </section>
  );
}

function Taskbar() {
  return (
    <footer className={"flex h-[51px] shrink-0 items-stretch border-t border-[#857a4a] bg-[#f3e7c3] text-black " + SANS}>
      <button type="button" aria-label="开始" className="flex w-[60px] shrink-0 items-center justify-center">
        <svg width="20" height="20" viewBox="0 0 20 20" aria-hidden="true">
          <path d="M0 3l8-1.200V9.500H0zM9 1.600L20 0v9.500H9zM0 10.500h8v7.700L0 17zM9 10.500h11V20L9 18.400z" />
        </svg>
      </button>
      <label className="flex w-[430px] shrink-0 items-center border border-[#c6c3b8] bg-white pl-[13px]">
        <svg width="22" height="22" viewBox="0 0 22 22" fill="none" stroke="#222" strokeWidth="1.600" className="shrink-0" aria-hidden="true">
          <circle cx="14" cy="7.500" r="6.500" />
          <path d="M9.500 12.500L1 21" />
        </svg>
        <input aria-label="搜索" placeholder="在这里输入你要搜索的内容" className="ml-[14px] min-w-0 flex-1 text-[19px] outline-none placeholder:text-[#333]" />
      </label>
      <button type="button" className="ml-[9px] flex w-[190px] shrink-0 items-center border-b-[3px] border-[#1471bd] pt-px pl-[9px] text-[15px]">
        <svg width="28" height="28" viewBox="0 0 28 28" className="shrink-0" aria-hidden="true">
          <rect width="28" height="28" rx="1" fill="#3aa4e6" />
          <path d="M13 20l8-8 7 8v8H12z" fill="#7db4ee" />
          <path d="M0 19L9 9l14 19H1c-1 0-1-1-1-1z" fill="#173f87" />
          <circle cx="18.500" cy="6.500" r="2.800" fill="#e6f4fd" />
        </svg>
        <span className="ml-[5px] whitespace-nowrap">QQ截图20211106...</span>
      </button>
      <button type="button" className="ml-[6px] flex w-[200px] shrink-0 items-center border-b-[3px] border-[#1471bd] bg-[#fcf6e7] pt-px pl-[14px] text-[16px]">
        <AcadLogo className="h-[26px] w-[26px]" />
        <span className="ml-[7px] whitespace-nowrap">AutoCAD 2007 - [...</span>
      </button>
      <span className="flex-1" />
      <button type="button" className="flex w-[131px] shrink-0 items-center text-[19px]">
        <svg width="28" height="22" viewBox="0 0 28 22" className="mr-[10px] shrink-0" aria-hidden="true">
          <path d="M6 21c-7 0-8-8-1-9C6 3 16 1 19 8c7-2 10 5 7 10-1 2-2 3-5 3z" fill="#b9dcf6" stroke="#8cbce4" />
          <path d="M7 18c-4-1-3-5 1-5 1-5 7-6 9-2" fill="#e5f3fd" />
          <path d="M18 3c0-4 6-4 6 0l-2 7h-2z" fill="#c11f35" />
          <circle cx="21" cy="12.500" r="1.800" fill="#c11f35" />
        </svg>
        <span className="whitespace-nowrap">17°C 多云</span>
      </button>
      <button type="button" aria-label="显示隐藏的图标" className="ml-[4px] flex w-[36px] shrink-0 items-center justify-center">
        <svg width="17" height="10" viewBox="0 0 17 10" fill="none" stroke="#111" strokeWidth="1.500" aria-hidden="true"><path d="M1 9l7.500-8L16 9" /></svg>
      </button>
      <button type="button" aria-label="立即开会" className="flex w-[30px] shrink-0 items-center justify-center">
        <svg width="16" height="20" viewBox="0 0 16 20" fill="none" stroke="#111" strokeWidth="1.400" aria-hidden="true">
          <rect x="1" y="5.500" width="9.500" height="9" rx="1.500" />
          <path d="M10.500 9l4-2.500v7l-4-2.500M3 2.500c2-2 5-2 7 0M3 17.500c2 2 5 2 7 0" />
        </svg>
      </button>
      <button type="button" aria-label="QQ" className="flex w-[28px] shrink-0 items-center justify-center">
        <svg width="20" height="20" viewBox="0 0 20 20" aria-hidden="true">
          <path d="M9 0c4 0 6 3 6 7 2 3 3 5 2 9H1c-1-4 0-6 2-9 0-4 2-7 6-7z" fill="#161616" />
          <ellipse cx="9" cy="14" rx="5" ry="5" fill="#fff" />
          <path d="M3 9c4 3 8 3 12 0v3c-4 2-8 2-12 0z" fill="#d8262c" />
          <circle cx="7" cy="4.500" r="1.500" fill="#fff" /><circle cx="11" cy="4.500" r="1.500" fill="#fff" />
          <path d="M2 18h6v2H2z" fill="#e9952a" />
          <rect x="9.500" y="9.500" width="10" height="8" rx="1" fill="#f3b53b" stroke="#c97e18" />
          <path d="M12 13.500h1M14 13.500h1M16 13.500h1" stroke="#8f4c09" />
        </svg>
      </button>
      <button type="button" aria-label="蓝牙" className="flex w-[30px] shrink-0 items-center justify-center">
        <svg width="16" height="20" viewBox="0 0 16 20" aria-hidden="true">
          <rect width="16" height="20" rx="8" fill="#1478d4" />
          <path d="M4.500 6.500l7 6.500L8 16V4l3.500 3-7 6.500" fill="none" stroke="#fff" strokeWidth="1.300" />
        </svg>
      </button>
      <button type="button" className="flex w-[44px] shrink-0 items-center justify-center pl-[4px] text-[15px]">ENG</button>
      <button type="button" className="flex w-[98px] shrink-0 flex-col items-center justify-center text-[15px] leading-[23px]">
        <time>10:45</time>
        <time>2021/11/6</time>
      </button>
      <button type="button" aria-label="通知" className="flex w-[46px] shrink-0 items-center justify-center">
        <svg width="20" height="20" viewBox="0 0 20 20" fill="none" stroke="#111" strokeWidth="1.400" aria-hidden="true">
          <path d="M.7.7h18.600v15H13L10 19l-3-3.300H.7z" />
        </svg>
      </button>
      <span className="ml-[12px] w-[6px] shrink-0 border-l border-[#b3a984]" />
    </footer>
  );
}

export default function App() {
  return (
    <div className="flex h-screen flex-col overflow-hidden border-t border-[#2a2129] bg-[#f3e7c3]">
      <main className="grid min-h-0 flex-1 grid-cols-[617fr_1301fr_2px]">
        <PhotoWindow />
        <CadWindow />
        <div className="bg-[#4a3638]" />
      </main>
      <Taskbar />
    </div>
  );
}
